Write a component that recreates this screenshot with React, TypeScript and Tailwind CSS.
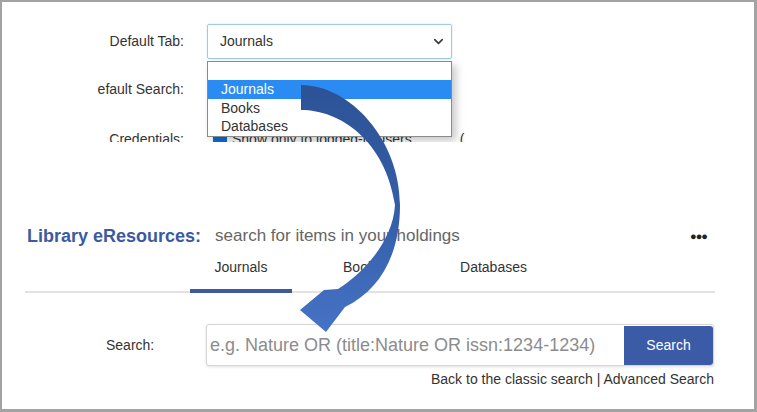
import { ChevronDown } from "lucide-react";

function CurvedArrow() {
  return (
    <svg
      className="pointer-events-none absolute left-0 top-0 z-20"
      width={757}
      height={412}
      viewBox="0 0 757 412"
    >
      <defs>
        <linearGradient id="arrowFill" x1="0" y1="0" x2="0" y2="1">
          <stop offset="0" stopColor="#2d5296" />
          <stop offset="0.55" stopColor="#355fa9" />
          <stop offset="1" stopColor="#4673c6" />
        </linearGradient>
      </defs>
      <path
        d="M301 85 C350 85 400 140 400 205 C400 255 380 290 345 307 L326 332 L300 310 L324 290 L338 289 C365 272 393 240 395 205 C385 140 340 110 301 110 Z"
        fill="url(#arrowFill)"
      />
    </svg>
  );
}

function SettingsCrop() {
  return (
    <div className="relative h-[140px] overflow-hidden text-[14px] text-[#333]">
      {/* Default Tab row */}
      <div className="mt-[22px] flex h-[35px] items-center">
        <div className="w-[182px] text-right">Default Tab:</div>
        <div className="relative ml-[23px] w-[245px]">
          <div className="flex h-[35px] items-center justify-between rounded-[2px] border border-[#9fcbe8] pl-[12px] pr-[5px] shadow-[0_0_2px_rgba(80,160,220,0.35)]">
            <span>Journals</span>
            <ChevronDown size={15} strokeWidth={2.6} color="#3a3a3a" />
          </div>
          {/* open list */}
          <div className="absolute left-0 top-[37px] z-10 w-[245px] border border-[#8a8a8a] bg-white shadow-[4px_4px_8px_rgba(0,0,0,0.22)]">
            <div className="h-[18px]" />
            <div className="h-[19px] bg-[#2a8cf2] pl-[13px] leading-[19px] text-white">Journals</div>
            <div className="h-[18px] pl-[13px] leading-[18px]">Books</div>
            <div className="h-[19px] pl-[13px] leading-[18px]">Databases</div>
          </div>
        </div>
      </div>

      {/* Default Search row */}
      <div className="mt-[18px] flex h-[24px] items-center">
        <div className="w-[182px] text-right">efault Search:</div>
      </div>

      {/* Credentials row */}
      <div className="mt-[26px] flex h-[24px] items-center">
        <div className="w-[182px] text-right">Credentials:</div>
        <div className="ml-[29px] h-[14px] w-[14px] rounded-[2px] bg-[#0b6fd8]" />
        <span className="ml-[5px]">Show only to logged-in users</span>
        <span className="ml-[48px]">(</span>
      </div>
    </div>
  );
}

function SearchPanel() {
  return (
    <div className="ml-[23px] w-[690px] text-[#333]">
      {/* Title */}
      <div className="mt-[82px] flex h-[24px] items-center pl-[2px] pr-[8px]">
        <span className="text-[18px] font-bold text-[#3b5a9f]">Library eResources:</span>
        <span className="ml-[14px] text-[17px] text-[#666]">search for items in your holdings</span>
        <span className="ml-auto text-[11px] font-bold leading-none tracking-[-1px] text-[#222]">●●●</span>
      </div>

      {/* Tabs */}
      <div className="flex border-b-2 border-[#e2e2e2] pl-[165px] text-[14px]">
        <div className="-mb-[2px] w-[102px] border-b-4 border-[#3b5a9f] pb-[12px] pt-[9px] text-center leading-[20px]">
          Journals
        </div>
        <div className="ml-[26px] w-[89px] pb-[12px] pt-[9px] text-center leading-[20px]">Books</div>
        <div className="ml-[28px] w-[117px] pb-[12px] pt-[9px] text-center leading-[20px]">Databases</div>
      </div>

      {/* Search row */}
      <div className="mt-[31px] flex items-center">
        <div className="w-[181px] pl-[81px] text-[14px]">Search:</div>
        <div className="flex h-[42px] w-[508px] items-center rounded-[3px] border border-[#d6d6d6] bg-white shadow-[0_1px_3px_rgba(0,0,0,0.12)]">
          <input
            className="h-full flex-1 bg-transparent pl-[3px] text-[18px] text-[#333] outline-none placeholder:text-[#8c8c8c]"
            placeholder="e.g. Nature OR (title:Nature OR issn:1234-1234)"
          />
          <button
            type="button"
            className="h-[39px] w-[89px] rounded-r-[3px] bg-[#3b5ba6] text-[14px] text-white"
          >
            Search
          </button>
        </div>
      </div>

      {/* Links */}
      <div className="mt-[4px] pr-[1px] text-right text-[14px] leading-[18px] text-[#333]">
        Back to the classic search | Advanced Search
      </div>
    </div>
  );
}

export default function App() {
  return (
    <div className="relative h-[412px] w-[757px] font-['Liberation_Sans',Arial,sans-serif]">
      <div className="h-[412px] w-[757px] overflow-hidden border-b-[3px] border-l-2 border-r-[3px] border-t-2 border-[#a3a3a3] bg-white">
        <SettingsCrop />
        <SearchPanel />
      </div>
      <CurvedArrow />
    </div>
  );
}
